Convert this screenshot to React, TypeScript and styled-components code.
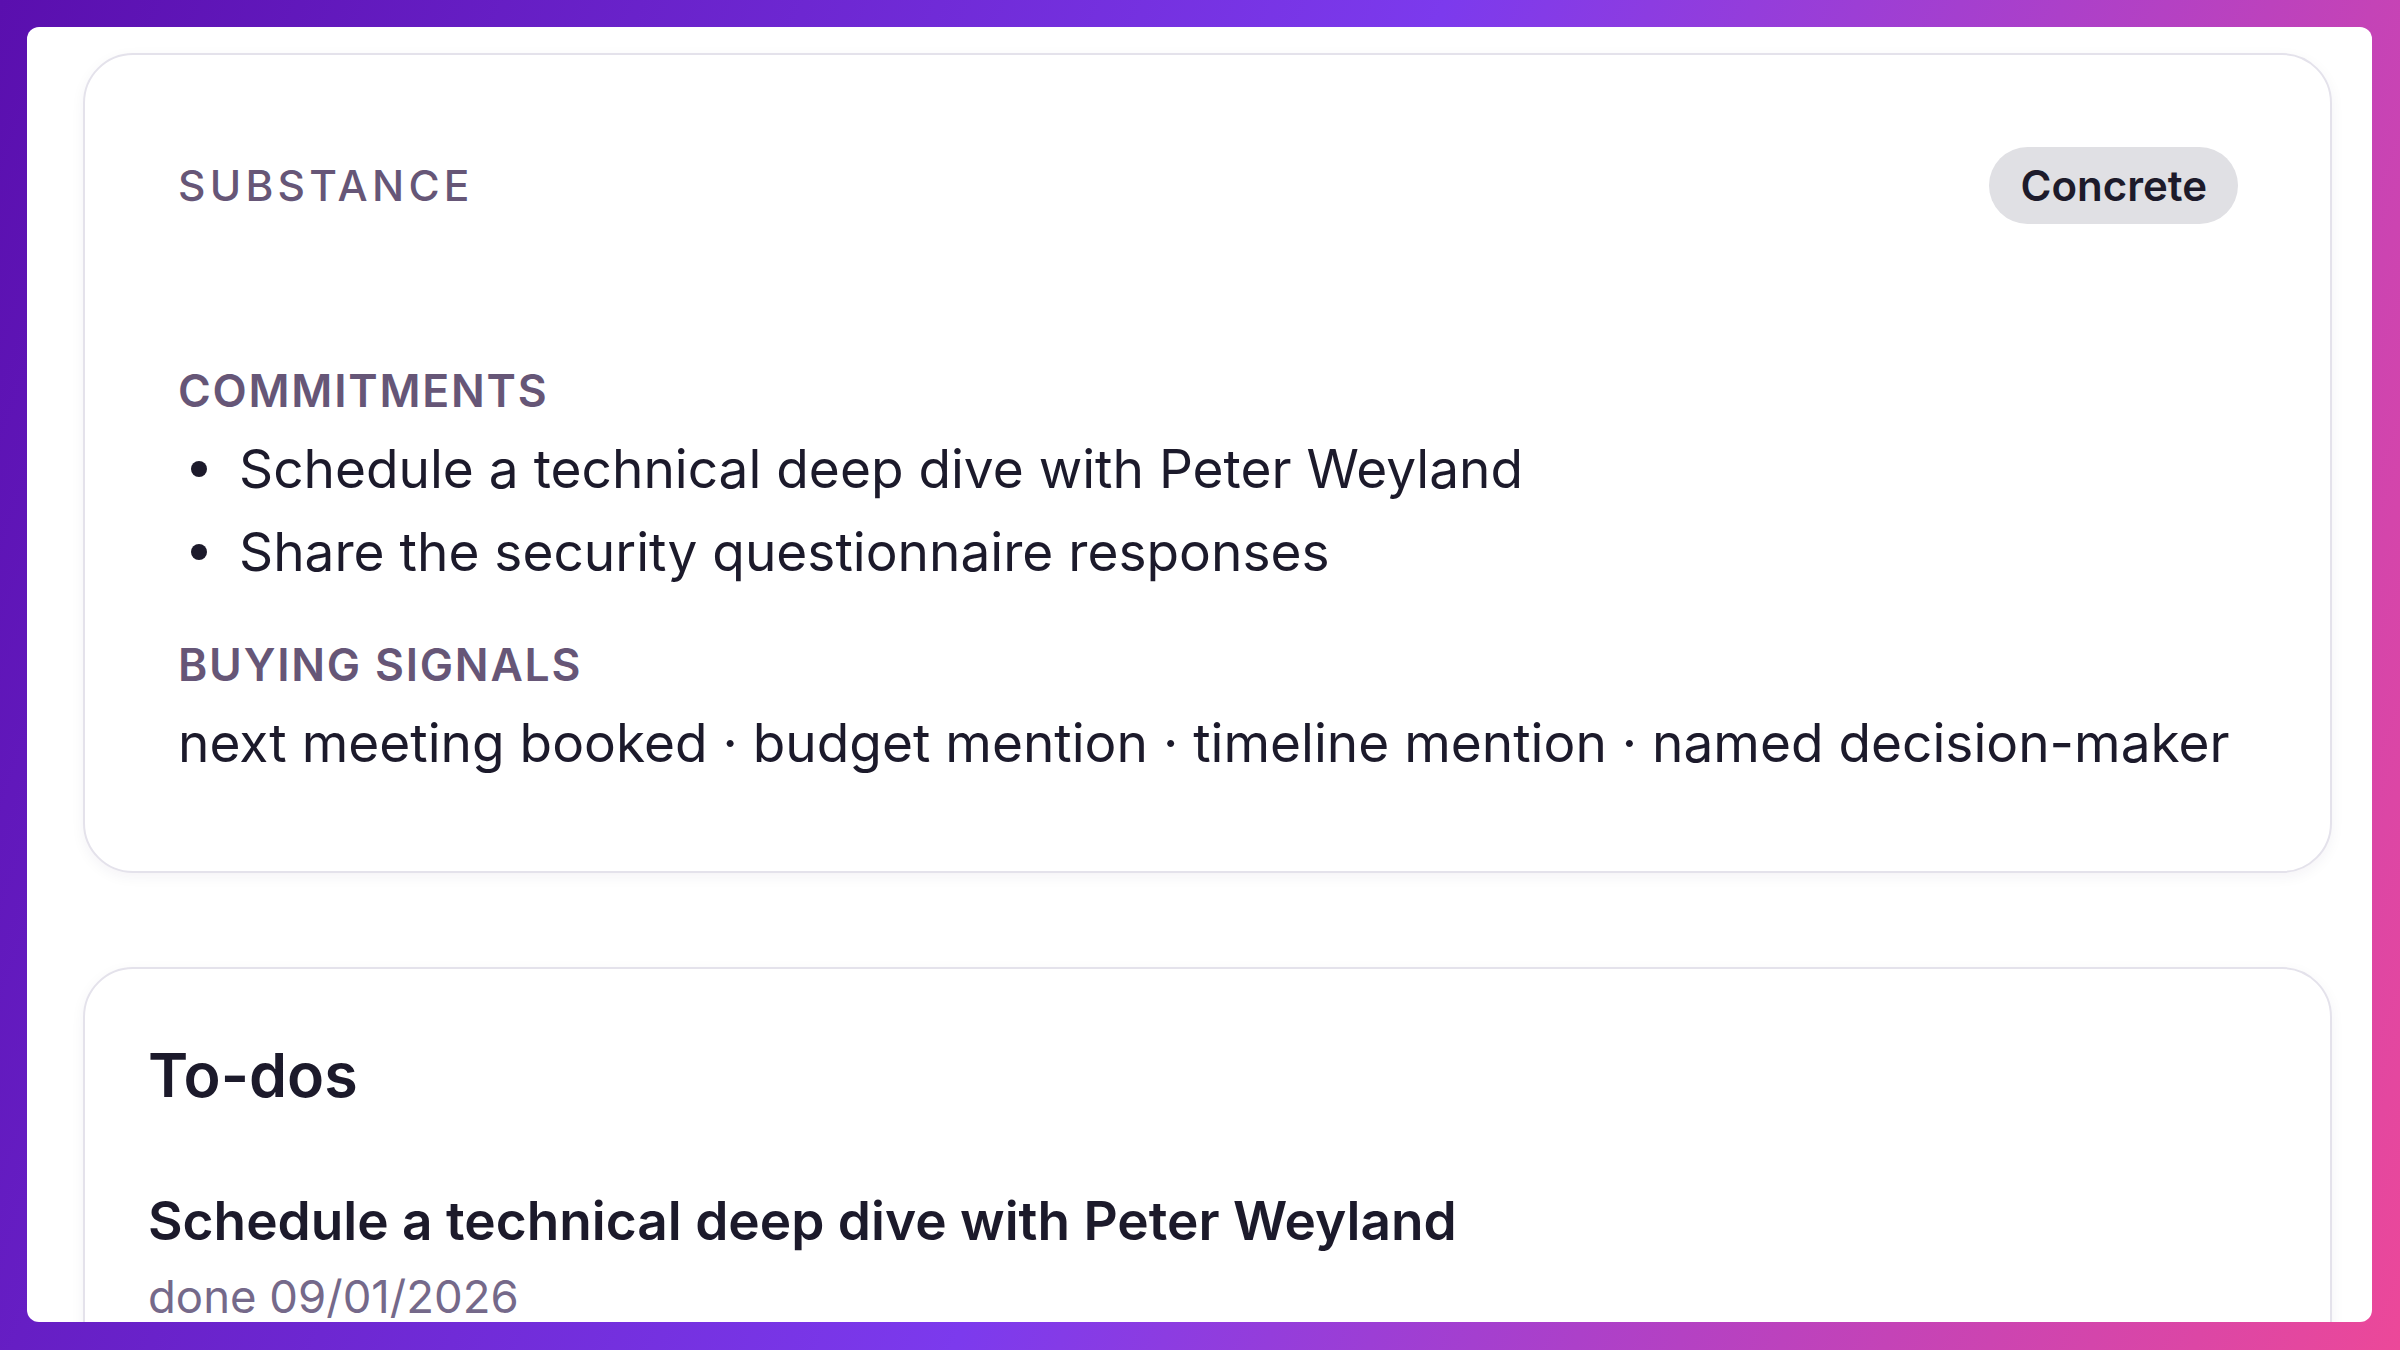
import React from 'react';
import styled, { createGlobalStyle } from 'styled-components';

const GlobalStyle = createGlobalStyle`
  html, body {
    margin: 0;
    padding: 0;
    height: 100%;
  }
  body {
    font-family: Inter, "Noto Sans", sans-serif;
    background: linear-gradient(110deg, #5a0fae 0%, #7c3aed 50%, #ec4899 100%);
    overflow: hidden;
    color: #1c1a2b;
  }
`;

const Frame = styled.div`
  height: 100vh;
  box-sizing: border-box;
  padding: 27px 28px 28px 27px;
`;

const Panel = styled.main`
  height: 100%;
  box-sizing: border-box;
  background: #fff;
  border-radius: 12px;
  overflow: hidden;
  padding: 26px 40px 0 56px;
  display: flex;
  flex-direction: column;
  gap: 94px;
`;

const Card = styled.section<{ $pad: string }>`
  flex-shrink: 0;
  background: #fff;
  border: 2px solid #e4e2eb;
  border-radius: 50px;
  padding: ${p => p.$pad};
  box-shadow: 0 4px 14px rgba(40, 20, 80, 0.05);
`;

const HeaderRow = styled.div`
  display: flex;
  align-items: center;
  justify-content: space-between;
`;

const Eyebrow = styled.h3`
  margin: 0;
  font-size: 42.5px;
  font-weight: 500;
  letter-spacing: 0.1em;
  color: #665677;
  text-transform: uppercase;
`;

const Badge = styled.span`
  display: inline-flex;
  align-items: center;
  height: 77px;
  padding: 0 31px;
  border-radius: 39px;
  background: #e0e0e4;
  font-size: 42px;
  font-weight: 600;
  color: #1d1b2b;
`;

const SectionLabel = styled.h4<{ $top: number }>`
  margin: ${p => p.$top}px 0 8px;
  font-size: 44.5px;
  line-height: 56px;
  font-weight: 600;
  letter-spacing: 0.04em;
  color: #665677;
  text-transform: uppercase;
`;

const Bullets = styled.ul`
  margin: 0;
  padding: 0;
  list-style: none;
  font-size: 53.2px;
  line-height: 83px;
`;

const Bullet = styled.li`
  display: flex;
  align-items: center;

  &::before {
    content: '';
    flex-shrink: 0;
    width: 16px;
    height: 16px;
    margin: 0 32px 0 13px;
    border-radius: 50%;
    background: #1c1a2b;
  }
`;

const Signals = styled.p`
  margin: 0;
  font-size: 53.2px;
  line-height: 83px;
`;

const CardTitle = styled.h2`
  margin: 0;
  font-size: 61px;
  line-height: 74px;
  font-weight: 600;
`;

const TodoTitle = styled.div`
  margin-top: 74px;
  font-size: 53.2px;
  line-height: 69px;
  font-weight: 600;
`;

const TodoMeta = styled.div`
  margin-top: 11px;
  font-size: 45.5px;
  line-height: 62px;
  color: #75698a;
`;

const commitments = [
  'Schedule a technical deep dive with Peter Weyland',
  'Share the security questionnaire responses',
];

const signals = ['next meeting booked', 'budget mention', 'timeline mention', 'named decision-maker'];

export default function App() {
  return (
    <>
      <GlobalStyle />
      <Frame>
        <Panel>
          <Card $pad="92px 92px 87px 93px">
            <HeaderRow>
              <Eyebrow>Substance</Eyebrow>
              <Badge>Concrete</Badge>
            </HeaderRow>
            <SectionLabel $top={139}>Commitments</SectionLabel>
            <Bullets>
              {commitments.map(c => (
                <Bullet key={c}>{c}</Bullet>
              ))}
            </Bullets>
            <SectionLabel $top={44}>Buying signals</SectionLabel>
            <Signals>{signals.join(' · ')}</Signals>
          </Card>
          <Card $pad="69px 63px 60px 63px">
            <CardTitle>To-dos</CardTitle>
            <TodoTitle>Schedule a technical deep dive with Peter Weyland</TodoTitle>
            <TodoMeta>done 09/01/2026</TodoMeta>
          </Card>
        </Panel>
      </Frame>
    </>
  );
}
